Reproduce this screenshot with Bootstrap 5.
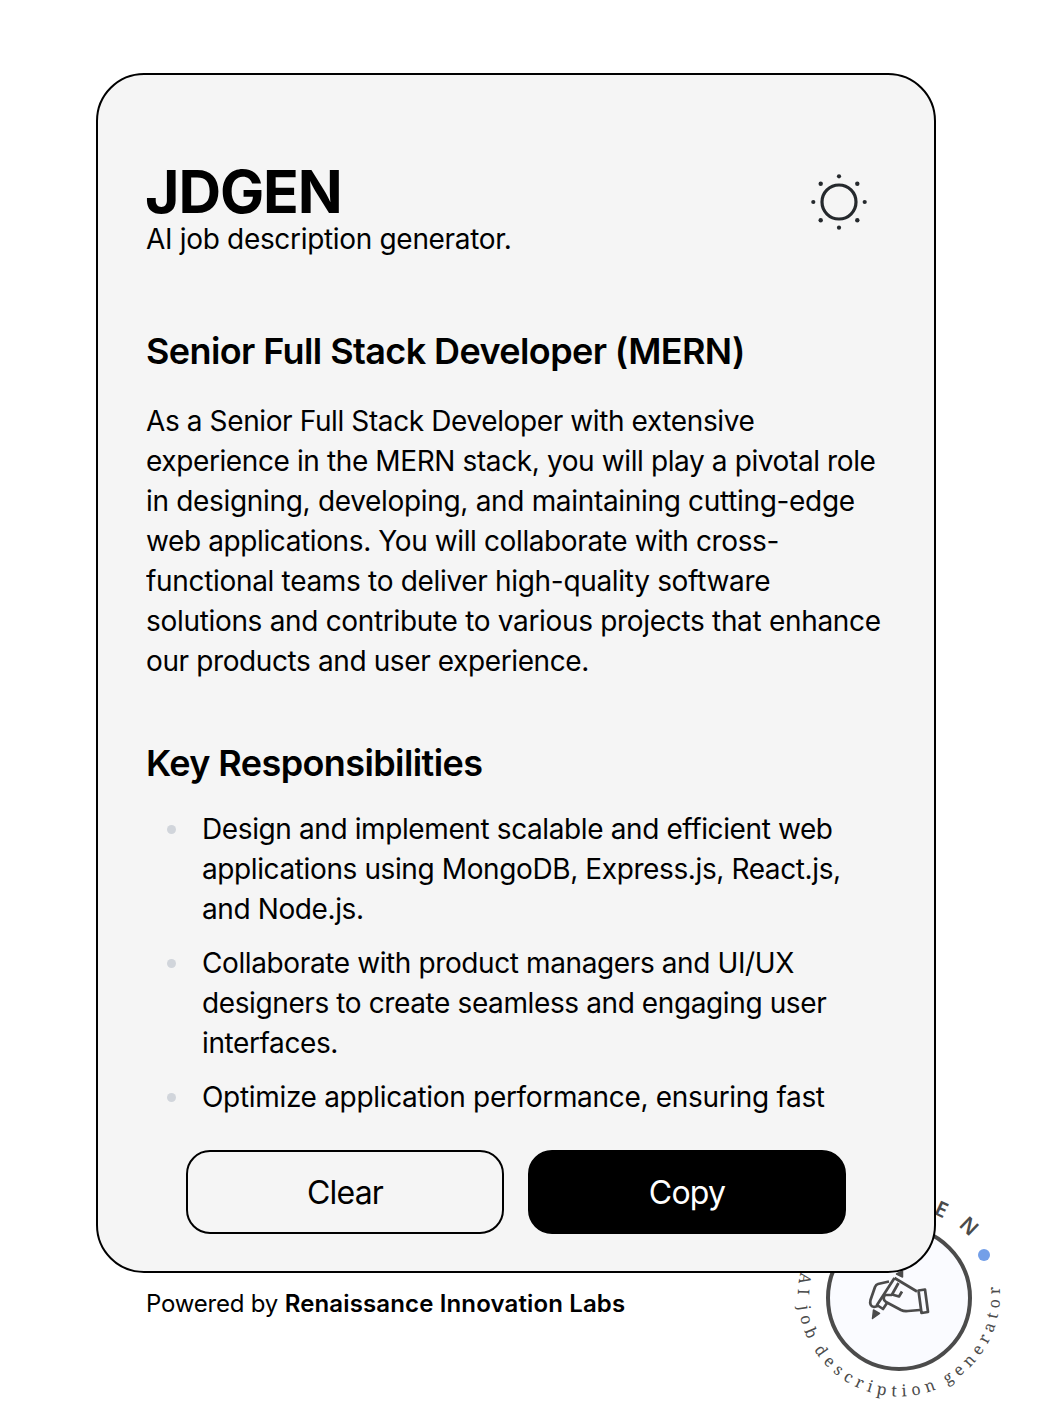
<!DOCTYPE html>
<html lang="en">
<head>
<meta charset="utf-8">
<meta name="viewport" content="width=device-width, initial-scale=1">
<title>JDGEN</title>
<link href="https://cdn.jsdelivr.net/npm/bootstrap@5.3.0/dist/css/bootstrap.min.css" rel="stylesheet">
<style>
body{font-family:Inter,"Liberation Sans",sans-serif;font-size:28px;line-height:40px;letter-spacing:-.32px;color:#000;background:#fff;height:1420px;overflow:hidden}
.shell{width:840px;margin:73px 0 0 96px}
.panel{height:1200px;border:2px solid #000;border-radius:48px;background:#f5f5f5;padding:87px 48px 37px;z-index:1}
.brand{font-size:59px;line-height:60px;font-weight:700;letter-spacing:-1.1px;text-indent:-1px}
.tagline{margin-top:-3px}
.sun{width:60px;height:60px;margin:10px 17px 0 0}
.output{flex:1 1 0;min-height:0;overflow:hidden;margin-top:70px;margin-right:-12px}
.output h2{font-size:36px;line-height:44px;font-weight:600;letter-spacing:-.6px}
.output ul{list-style:none}
.output li{margin-bottom:14px;padding-left:56px;position:relative}
.output li::before{content:"";position:absolute;left:21px;top:16px;width:9px;height:9px;border-radius:50%;background:#d1d5db}
.snug{letter-spacing:-.39px}
.responsibilities{margin-top:60px}
.actions{padding:0 40px;gap:24px;margin-top:30px}
.act{height:84px;border:2px solid #000;border-radius:24px;font-size:32px;letter-spacing:-.8px;color:#000;padding:2px 0 0}
.act.solid{background:#000;color:#fff}
.credit{font-size:24px;line-height:32px;margin:15px 0 0 50px;letter-spacing:-.2px}
.credit strong{font-weight:600;letter-spacing:.14px}
.seal{position:absolute;left:779px;top:1178px;width:240px;height:240px}
</style>
<script src="https://cdn.jsdelivr.net/npm/bootstrap@5.3.0/dist/js/bootstrap.bundle.min.js"></script>
</head>
<body class="position-relative">
<svg class="seal" viewBox="779 1178 240 240" fill="none" stroke="#4b4b4b">
  <defs>
    <path id="low" d="M800.6 1272.3 A101 101 0 1 0 999 1282"/>
  </defs>
  <circle cx="899" cy="1298" r="71" fill="#fafbff" stroke-width="4"/>
  <circle cx="984" cy="1255" r="6" fill="#739fe8" stroke="none"/>
  <g fill="#4b4b4b" stroke="none">
    <text font-family="Noto Serif, DejaVu Serif, serif" font-size="16" word-spacing="-3"><textPath href="#low" textLength="349">AI job description generator</textPath></text>
    <text font-family="Noto Sans, sans-serif" font-size="21" font-weight="600" transform="rotate(25 899 1298)"><tspan x="894" y="1207">E</tspan></text>
    <text font-family="Noto Sans, sans-serif" font-size="21" font-weight="600" transform="rotate(43.5 899 1298)"><tspan x="892" y="1205">N</tspan></text>
  </g>
  <g stroke-width="2.700" stroke-linejoin="round">
    <path d="M889 1281.500L878 1284Q876 1284.500 875 1287L870.500 1300Q869 1306 874 1307L878 1306"/>
    <path d="M894.500 1278L917 1291.500M894.500 1278L877 1305L883 1309L887 1303"/>
    <path d="M898.500 1283L892 1294.500L899 1296.500L902 1291.500M885 1295L892 1295M885 1295Q882 1299 886 1302L901 1310Q904 1311.500 908 1311L920 1310"/>
    <path d="M918.500 1290.500L925 1289.500L928 1312L921.500 1313Z"/>
    <path d="M873.500 1310L879.500 1313.500L872.500 1318.500ZM896.500 1274L902.500 1277V1271Z" fill="#4b4b4b" stroke-width="1.500"/>
  </g>
</svg>
<div class="shell">
  <main class="panel position-relative d-flex flex-column">
    <header class="d-flex justify-content-between align-items-start">
      <div>
        <h1 class="brand m-0">JDGEN</h1>
        <p class="mb-0 tagline">AI job description generator.</p>
      </div>
      <svg class="sun" viewBox="0 0 60 60"><circle cx="30" cy="30" r="17" fill="none" stroke="#25292d" stroke-width="3.200"/><g fill="#25292d"><circle cx="30" cy="4.300" r="2.100"/><circle cx="30" cy="55.700" r="2.100"/><circle cx="4.300" cy="30" r="2.100"/><circle cx="55.700" cy="30" r="2.100"/><circle cx="11.700" cy="11.700" r="2.200"/><circle cx="48.300" cy="11.700" r="2.200"/><circle cx="11.700" cy="48.300" r="2.200"/><circle cx="48.300" cy="48.300" r="2.200"/></g></svg>
    </header>
    <section class="output">
      <h2 class="mb-0">Senior Full Stack Developer (MERN)</h2>
      <p class="mt-4 mb-0 pt-1"><span class="snug">As a Senior Full Stack Developer with extensive<br>experience in the MERN stack, you will play a pivotal role</span><br>in designing, developing, and maintaining cutting-edge<br><span class="snug">web applications. You will collaborate with cross-</span><br>functional teams to deliver high-quality software<br>solutions and contribute to various projects that enhance<br><span class="snug">our products and user experience.</span></p>
      <h2 class="responsibilities mb-4">Key Responsibilities</h2>
      <ul class="m-0 p-0">
        <li class="snug">Design and implement scalable and efficient web<br>applications using MongoDB, Express.js, React.js,<br>and Node.js.</li>
        <li class="snug">Collaborate with product managers and UI/UX<br>designers to create seamless and engaging user<br>interfaces.</li>
        <li>Optimize application performance, ensuring fast</li>
      </ul>
    </section>
    <div class="actions d-flex">
      <button class="act btn flex-fill w-50">Clear</button>
      <button class="act solid btn flex-fill w-50">Copy</button>
    </div>
  </main>
  <footer class="credit">Powered by <strong>Renaissance Innovation Labs</strong></footer>
</div>
</body>
</html>
